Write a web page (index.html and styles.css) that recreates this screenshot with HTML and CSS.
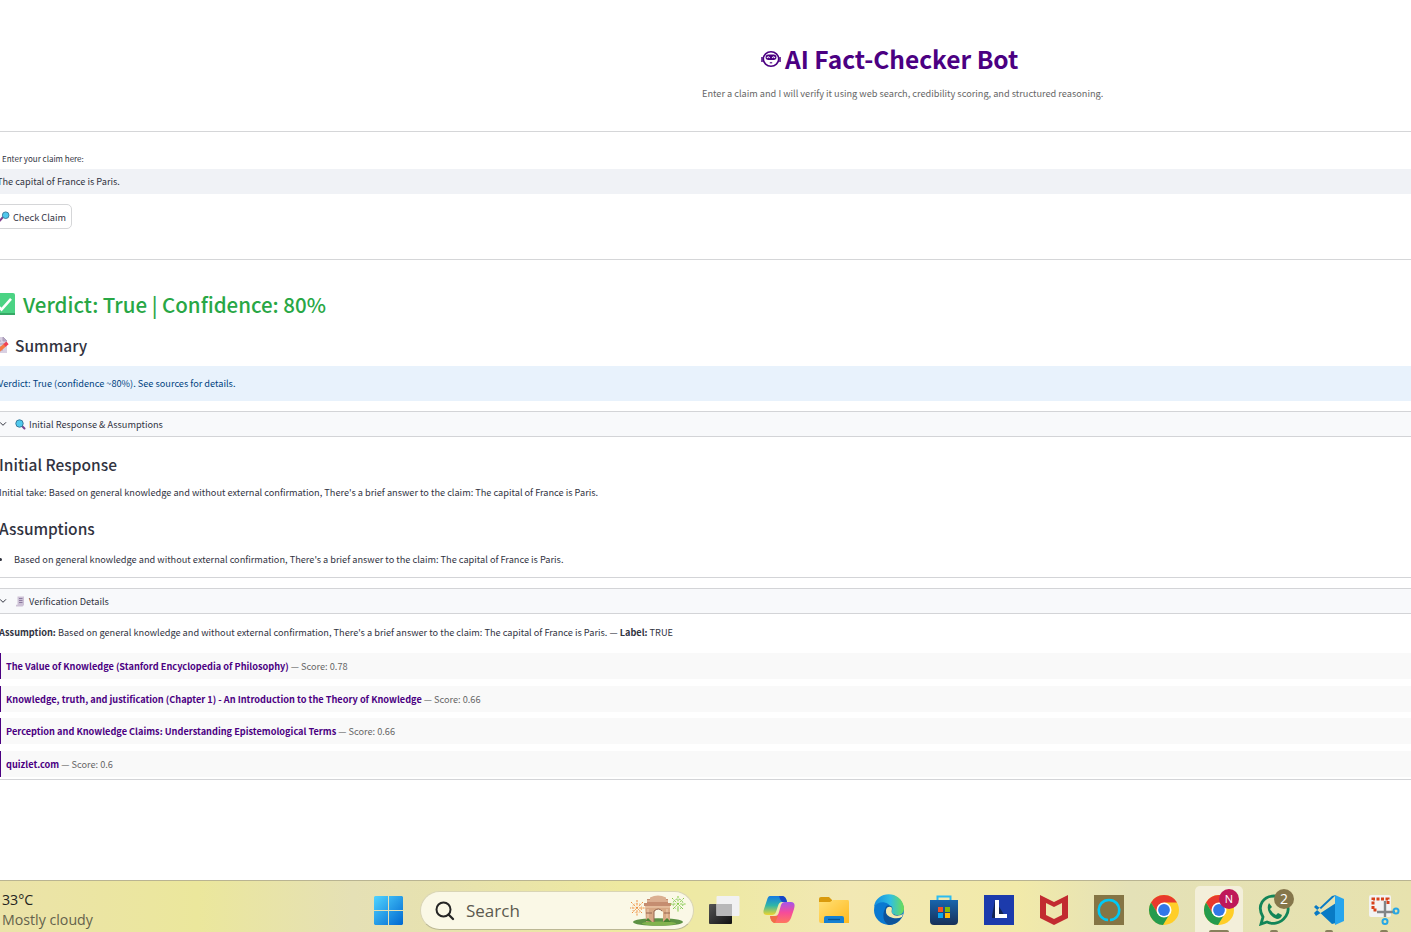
FILE: index.html
```html
<!DOCTYPE html>
<html lang="en">
<head>
<meta charset="utf-8">
<title>AI Fact-Checker Bot</title>
<link rel="stylesheet" href="styles.css">
</head>
<body>
<main class="page">
  <header class="hero">
    <h1 class="title">
      <svg class="bot" viewBox="0 0 20 18"><ellipse cx="10" cy="9" rx="7.7" ry="7.3" fill="none" stroke="currentColor" stroke-width="1.6"/><path d="M1 7v5M19 7v5" stroke="currentColor" stroke-width="1.5"/><rect x="4.6" y="4.4" width="10.8" height="5.6" rx="2.7" fill="currentColor"/><path d="M6 8q1.3-2.6 2.6 0M11.300 8q1.300-2.600 2.600 0" fill="none" stroke="#fff" stroke-width="1.1"/><path d="M8.800 12.800h2.400" stroke="currentColor" stroke-width="1.1"/></svg>
      <span>AI Fact-Checker Bot</span>
    </h1>
    <p class="subtitle">Enter a claim and I will verify it using web search, credibility scoring, and structured reasoning.</p>
  </header>
  <section class="form">
    <label class="label">Enter your claim here:</label>
    <div class="input"><span>The capital of France is Paris.</span></div>
    <button class="button">
      <svg class="lens" viewBox="0 0 12 12"><path d="M4 7L1 10.500" stroke="#81408f" stroke-width="2.300" stroke-linecap="round"/><circle cx="7.300" cy="4.600" r="3.600" fill="#50c9ed" stroke="#397a9b"/></svg>
      <span>Check Claim</span>
    </button>
  </section>
  <section class="verdict">
    <svg class="check" viewBox="0 0 23 23"><rect width="23" height="22" rx="2" fill="#4bd384"/><path d="M0 21h23" stroke="#37a866" stroke-width="2"/><path d="M4.500 11.500l5 5L19 5.800" fill="none" stroke="#fff" stroke-width="2.600"/></svg>
    <h2 class="verdict-text">Verdict: True | Confidence: 80%</h2>
  </section>
  <div class="summary">
    <svg class="memo" viewBox="0 0 18 18"><path d="M2 1h10l4 4v12H2z" fill="#d9d0e2"/><path d="M12 1v4h4zM4 5h6M4 8h9M4 11h8M4 14h8" stroke="#ac9fbb" fill="#b5a8c3"/><path d="M6 16l8-7" stroke="#f67942" stroke-width="3.600"/><path d="M13.500 9.400l3-2.500" stroke="#ef4155" stroke-width="3.600"/></svg>
    <h3 class="h3 summary-text">Summary</h3>
  </div>
  <div class="info"><span>Verdict: True (confidence ~80%). See sources for details.</span></div>
  <section class="panel response">
    <div class="panel-head">
      <svg class="chevron" viewBox="0 0 8 6"><path d="M1 1.300l3 3 3-3" fill="none" stroke="#31333f"/></svg>
      <svg class="emoji" viewBox="0 0 11 11"><path d="M6.500 6.500l3 3" stroke="#76418c" stroke-width="2" stroke-linecap="round"/><circle cx="4.500" cy="4.500" r="3.700" fill="#50c9ed" stroke="#397a9b"/></svg>
      <span class="panel-title first">Initial Response &amp; Assumptions</span>
    </div>
    <h3 class="h3 response-title">Initial Response</h3>
    <p class="copy"><span class="response-copy">Initial take: Based on general knowledge and without external confirmation, There's a brief answer to the claim: The capital of France is Paris.</span></p>
    <h3 class="h3 assumptions-title">Assumptions</h3>
    <ul class="list"><li><span class="list-copy">Based on general knowledge and without external confirmation, There's a brief answer to the claim: The capital of France is Paris.</span></li></ul>
  </section>
  <section class="panel details">
    <div class="panel-head">
      <svg class="chevron" viewBox="0 0 8 6"><path d="M1 1.300l3 3 3-3" fill="none" stroke="#31333f"/></svg>
      <svg class="emoji" viewBox="0 0 11 11"><path d="M2.500.5H9V9L7.500 10.500H1V8.800h1.500z" fill="#cdc2d6"/><path d="M4 2.500h3.500M4 4.500h3.500M4 6.500h3.500" stroke="#8e7ba0"/></svg>
      <span class="panel-title">Verification Details</span>
    </div>
    <p class="copy assumption"><b>Assumption:</b> Based on general knowledge and without external confirmation, There's a brief answer to the claim: The capital of France is Paris. — <b>Label:</b> TRUE</p>
    <div class="sources">
      <div class="source"><b>The Value of Knowledge (Stanford Encyclopedia of Philosophy)</b><span>— Score: 0.78</span></div>
      <div class="source"><b>Knowledge, truth, and justification (Chapter 1) - An Introduction to the Theory of Knowledge</b><span>— Score: 0.66</span></div>
      <div class="source"><b>Perception and Knowledge Claims: Understanding Epistemological Terms</b><span>— Score: 0.66</span></div>
      <div class="source"><b>quizlet.com</b><span>— Score: 0.6</span></div>
    </div>
  </section>
</main>
<footer class="taskbar">
  <div class="weather"><span class="temp">33°C</span><span class="sky">Mostly cloudy</span></div>
  <svg class="windows" viewBox="0 0 29 29"><defs><linearGradient id="win" x2="1" y2="1"><stop stop-color="#50d4ff"/><stop offset="1" stop-color="#0067d0"/></linearGradient></defs><path fill="url(#win)" d="M1 0h13v14H0V1zM15 0h13l1 1v13H15zM0 15h14v14H1l-1-1zM15 15h14v13l-1 1H15z"/></svg>
  <div class="search">
    <svg class="search-icon" viewBox="0 0 20 20"><circle cx="8.500" cy="8.500" r="7" fill="none" stroke="#252525" stroke-width="2"/><path d="M13.500 13.500l4.500 4.500" stroke="#252525" stroke-width="2.300" stroke-linecap="round"/></svg>
    <span class="search-text">Search</span>
    <svg class="gate" viewBox="0 0 56 32"><ellipse cx="28" cy="27" rx="25" ry="3.800" fill="#5d9144"/><ellipse cx="29" cy="28.500" rx="17" ry="2" fill="#82b34e"/><path d="M15 9h25v18h-7V17q-4.500-6-9 0v10h-8z" fill="#d7a783"/><path d="M14 8h27v3H14zM17 4h21v5H17z" fill="#c58d70"/><path d="M20 2.500q8-4 16 0V5H20z" fill="#dbb091"/><path d="M17 6h21M15 12h25M18 14v11M37 14v11" stroke="#f0ceb0"/><path d="M24 27V16q4.500-4 8 0M16 18h6M34 18h6" fill="none" stroke="#956650"/><path d="M15 26l3-3 4 4zM33 27l4-4 4 4z" fill="#47842e"/><g fill="none" stroke-dasharray="2 1.400"><path stroke="#ee8f40" d="M7 5v17M-1 13h17M1 7l12 12M13 7L1 19"/><circle cx="7" cy="13" r="4.700" stroke="#f4a967"/><path stroke="#85cc45" d="M48 1v17M40 9h17M42 3l12 12M54 3L42 15"/><circle cx="48" cy="9" r="5" stroke="#77c34e"/></g></svg>
  </div>
  <div class="apps">
    <div class="app"><svg viewBox="0 0 32 32"><defs><linearGradient id="tv" y2="1" x2="1"><stop stop-color="#555"/><stop offset="1" stop-color="#111"/></linearGradient></defs><rect x="1" y="10" width="23" height="20" rx="1" fill="url(#tv)"/><rect x="8.500" y="2" width="23" height="20" rx="1" fill="#f1f1f2"/><path d="M8.500 10H24v12H8.500z" fill="#b8b8b9"/></svg></div>
    <div class="app"><svg viewBox="0 0 32 32"><defs><linearGradient id="cl" y2="1" x2="0"><stop stop-color="#157ae3"/><stop offset=".5" stop-color="#2fb6a7"/><stop offset="1" stop-color="#efd52d"/></linearGradient><linearGradient id="cr" y2="1" x2="0"><stop stop-color="#a355eb"/><stop offset=".5" stop-color="#f64b9a"/><stop offset="1" stop-color="#ff765e"/></linearGradient></defs><path d="M7 2h12q4 0 5 6h-5q-3 0-4 4l-2 6q-1 3-4 3H4q-5 0-3-6l3-9q1-4 3-4z" fill="url(#cl)"/><path d="M25 8h3q5 0 3 7l-3 9q-2 5-6 5H12q-4 0-5-7h5q3 0 4-4l2-7q1-3 4-3z" fill="url(#cr)"/><path d="M16 2h4q3 1 4 6h-5l-2-3z" fill="#1746c7"/><path d="M7 22h8l-3 7q-4 0-5-7z" fill="#f06e47"/></svg></div>
    <div class="app"><svg viewBox="0 0 32 32"><defs><linearGradient id="folder" y2="1" x2="1"><stop stop-color="#ffe076"/><stop offset="1" stop-color="#ffb91e"/></linearGradient></defs><path d="M1 5q0-2 2-2h8l3 3v5H1z" fill="#d99a0c"/><path d="M1 8h11l3-2h15q1 0 1 2v21H3q-2 0-2-2z" fill="url(#folder)"/><path d="M6 29v-5q0-2 2-2h16q2 0 2 2v5z" fill="#1680d2"/><path d="M10 25.500h12" stroke="#0b538f" stroke-width="1.300"/></svg></div>
    <div class="app"><svg viewBox="0 0 32 32"><defs><linearGradient id="edge" x2="1"><stop stop-color="#118ce0"/><stop offset=".55" stop-color="#31bfe1"/><stop offset="1" stop-color="#6dde52"/></linearGradient></defs><circle cx="16" cy="16" r="15" fill="#0a79d1"/><path d="M1 13C3-4 29-4 31 14c0 7-6 9-12 6-3-2 0-3-1-6C16 7 5 6 1 13z" fill="url(#edge)"/><path d="M12 15q1-5 6-3c3 2 0 5 1 7 3 3 8 3 11 1l-1 3q-5 8-13 8C10 29 9 20 12 15z" fill="#0d549b"/><path d="M13 16q1-4 5-3c2 1 0 4 1 6 3 4 7 3 11 1l-1 3q-4 2-9 1-8-2-7-8z" fill="#f3e9ae"/></svg></div>
    <div class="app"><svg viewBox="0 0 32 32"><defs><linearGradient id="store" y2="1" x2="0"><stop stop-color="#1765ad"/><stop offset="1" stop-color="#173058"/></linearGradient></defs><path d="M9.500 7V2.500h13V7" fill="none" stroke="#2bbcf1" stroke-width="2"/><path d="M2 6h28v21q0 4-4 4H6q-4 0-4-4z" fill="url(#store)"/><path d="M10 13h5v5h-5z" fill="#f35325"/><path d="M17 13h5v5h-5z" fill="#81bc06"/><path d="M10 19h5v5h-5z" fill="#05a6f0"/><path d="M17 19h5v5h-5z" fill="#ffba08"/></svg></div>
    <div class="app"><svg viewBox="0 0 32 32"><path fill="#1c3bac" d="M1 1h30v30H1z"/><path d="M12 6L9 22v2h14" fill="#122451"/><path d="M12 6h4v14h8v4H12z" fill="#fff"/></svg></div>
    <div class="app"><svg viewBox="0 0 32 32"><path d="M2 1l14 7 14-7v23l-14 7-14-7zM8 9v12l8 4 8-4V9l-8 4z" fill="#c22b30" fill-rule="evenodd"/></svg></div>
    <div class="app"><svg viewBox="0 0 32 32"><path fill="#857545" d="M1 1h30v30H1z"/><path d="M15 26C2 25 3 6 16 6s14 19 1 20" fill="none" stroke="#00c9f5" stroke-width="2.600"/></svg></div>
    <div class="app"><svg viewBox="0 0 32 32"><g id="chrome"><circle cx="16" cy="16" r="15" fill="#ffce28"/><path d="M3 8.500A15 15 0 0 1 29 8.500H16l-7 10z" fill="#e8392d"/><path d="M3 8.500L10 20q5 4 11 1l-6 10A15 15 0 0 1 3 8.500z" fill="#249b4d"/><circle cx="16" cy="16" r="7.500" fill="#fff"/><circle cx="16" cy="16" r="5.900" fill="#3277e8"/></g></svg></div>
    <div class="app active"><svg viewBox="0 0 32 32"><use href="#chrome"/></svg><span class="badge profile">N</span><i class="mark wide"></i></div>
    <div class="app"><svg viewBox="0 0 32 32"><path d="M3 30l2-7C-2 11 6 2 16 2s18 11 12 20-15 8-19 6z" fill="none" stroke="#128558" stroke-width="2.800"/><path d="M11 9l3 4-2 2q2 4 6 6l2-2 4 2q-1 4-5 4C13 24 7 15 11 9z" fill="#128558"/></svg><span class="badge count">2</span><i class="mark"></i></div>
    <div class="app"><svg viewBox="0 0 32 32"><path d="M23 1L8 15l-5-4-2 2 18 17 4-1V9L3 22l-2-3L19 2z" fill="#087ac5"/><path d="M22 1l9 4v22l-9 4z" fill="#27a5ed"/></svg><i class="mark"></i></div>
    <div class="app"><svg viewBox="0 0 32 32"><rect x="1" y="1" width="22" height="22" rx="2" fill="#f3f3f3"/><path d="M20 10V5H5v11h5" fill="none" stroke="#d8411a" stroke-width="3" stroke-dasharray="3 1.500"/><path d="M17 7v16M9 18h18" stroke="#828587" stroke-width="2.400"/><circle cx="17" cy="27.500" r="2.500" fill="none" stroke="#26a7e5" stroke-width="2"/><circle cx="28" cy="17" r="2.500" fill="none" stroke="#26a7e5" stroke-width="2"/></svg><i class="mark"></i></div>
  </div>
</footer>
</body>
</html>
```
FILE: styles.css
```css
* { box-sizing: border-box; }
body { margin: 0; width: 1411px; height: 932px; overflow: hidden; background: #fff; color: #31333f; font: 9.2px/16px "Noto Sans CJK SC", sans-serif; display: flex; flex-direction: column; }
h1, h2, h3, p, ul { margin: 0; padding: 0; }
svg { display: block; flex-shrink: 0; }
.page { height: 880px; flex-shrink: 0; white-space: nowrap; }
.hero { height: 132px; padding-top: 39px; border-bottom: 1px solid #d5d6d8; }
.title { display: flex; align-items: center; gap: 4px; height: 40px; padding-left: 761px; color: #4b0082; font-size: 24.500px; font-weight: 700; line-height: 40px; }
.bot { width: 20px; height: 18px; }
.subtitle { margin: 6px 0 0 702px; color: #666; }
.form { height: 128px; border-bottom: 1px solid #d5d6d8; padding-top: 19px; }
.label { display: block; height: 18px; padding-left: 2px; font-size: 8px; }
.input { height: 25px; margin-left: -4px; padding-left: 1px; background: #f0f2f6; line-height: 25px; }
.button { display: flex; align-items: center; gap: 3px; height: 25px; width: 79px; margin: 10px 0 0 -7px; padding: 0 0 0 5px; border: 1px solid #d5d6d8; border-radius: 5px; background: #fff; color: inherit; font: inherit; }
.lens { width: 11px; height: 11px; }
.verdict { display: flex; align-items: center; gap: 8px; height: 40px; margin: 24px 0 0 -8px; }
.check { width: 23px; height: 23px; }
.verdict-text { color: #28a745; font-size: 20.500px; line-height: 40px; font-weight: 500; }
.summary { display: flex; align-items: center; gap: 6px; height: 30px; margin: 6px 0 0 -9px; }
.memo { width: 18px; height: 18px; }
.h3 { font-size: 15.500px; line-height: 30px; font-weight: 500; }
.info { height: 35px; margin-top: 6px; background: #e8f2fc; color: #004280; line-height: 35px; }
.info span { margin-left: -2px; }
.panel { border-top: 1px solid #d3d4d7; border-bottom: 1px solid #d3d4d7; }
.response { height: 167px; margin-top: 10px; }
.details { height: 192px; margin-top: 10px; }
.panel-head { height: 25px; display: flex; align-items: center; background: #f8f9fb; border-bottom: 1px solid #d3d4d7; }
.chevron { width: 8px; height: 6px; margin-left: -1px; }
.emoji { width: 11px; height: 11px; margin: 0 3px 0 8px; }
.response-title { margin: 12px 0 0 -1px; }
.copy { margin: 5px 0 0 -1px; }
.assumptions-title { margin: 13px 0 0 -1px; }
.list { list-style: none; margin-top: 8px; }
.list li { display: flex; align-items: center; }
.list li::before { content: ""; width: 2px; height: 3px; margin-right: 12px; background: #31333f; border-radius: 0 2px 2px 0; }
.assumption { margin-top: 10px; }
.sources { display: grid; row-gap: 6.500px; margin-top: 13px; }
.source { display: flex; align-items: center; gap: 2px; height: 26px; border-left: 1px solid #4b0082; background: #f9f9f9; padding-left: 5px; color: #666; }
.source b { color: #4b0082; }
.taskbar { height: 52px; display: flex; align-items: flex-start; border-top: 1px solid #b9b492; background: linear-gradient(90deg, #ebe3a9, #ebe79c 14%, #e5e0b5 25%, #e7e2ae 32%, #eee9a0 44%, #eee9a6 52%, #f2e8b4 60%, #f2eaa9 72%, #e4e1b7 80%, #e7e2ae 100%); font-family: "Open Sans", sans-serif; }
.weather { width: 385px; padding: 9px 0 0 2px; display: flex; flex-direction: column; font-size: 14.200px; line-height: 20px; color: #24241d; }
.sky { color: #64624c; }
.windows { width: 29px; height: 29px; margin-top: 15px; }
.search { display: flex; align-items: center; width: 275px; height: 39px; margin: 10px 0 0 17px; padding: 0 7px 0 14px; border: 1px solid #d9d5b5; border-bottom-color: #bcb895; border-radius: 20px; background: #faf8e6; }
.search-icon { width: 20px; height: 20px; }
.search-text { width: 164px; margin-left: 11px; font-size: 17px; color: #5c5a4f; }
.gate { width: 56px; height: 32px; }
.apps { display: grid; grid-template-columns: repeat(13, 55px); margin-left: 2px; height: 51px; }
.app { position: relative; width: 55px; height: 51px; display: flex; justify-content: center; padding-top: 13px; }
.app > svg { width: 32px; height: 32px; }
.active::before { content: ""; position: absolute; left: 4px; top: 5px; width: 48px; height: 46px; background: #f3efda; border-radius: 5px 5px 0 0; }
.active > svg { position: relative; }
.badge { position: absolute; top: 8px; left: 28px; width: 20px; height: 20px; border-radius: 50%; color: #fff; text-align: center; line-height: 20px; }
.profile { background: #bf1759; font-size: 11px; }
.count { background: #85764b; font-size: 14px; }
.mark { position: absolute; bottom: 0; left: 24px; width: 8px; height: 2px; border-radius: 2px 2px 0 0; background: #88805c; }
.wide { left: 18px; width: 20px; }
```
